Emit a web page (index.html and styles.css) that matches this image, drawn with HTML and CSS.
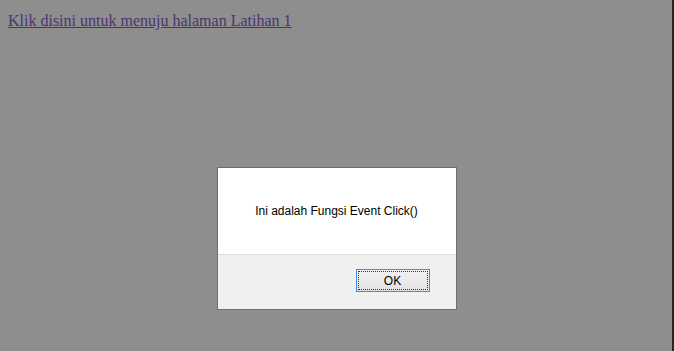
FILE: index.html
```html
<!DOCTYPE html>
<html lang="en">
<head>
    <meta charset="UTF-8">
    <title>Latihan Event Click</title>
    <link rel="stylesheet" href="styles.css">
</head>
<body>
    <a class="link" href="#">Klik disini untuk menuju halaman Latihan 1</a>

    <div class="overlay">
        <div class="dialog">
            <div class="dialog-body">Ini adalah Fungsi Event Click()</div>
            <div class="dialog-footer">
                <button class="btn-ok">OK</button>
            </div>
        </div>
    </div>
</body>
</html>
```

FILE: styles.css
```css
html {
    background: #8e8e8e;
    height: 100%;
}

body {
    margin: 12px 8px 8px;
    font-family: "Liberation Serif", "Times New Roman", serif;
    font-size: 16px;
}

.link {
    color: #4b3470;
}

/* dimmed layer with the alert box on top */
.overlay {
    position: fixed;
    top: 0;
    left: 0;
    right: 0;
    bottom: 0;
    border-right: 2px solid #262626;
    display: flex;
    justify-content: center;
    align-items: flex-start;
    padding: 167px 0 0 1px;
}

.dialog {
    width: 238px;
    border: 1px solid #6e6e6e;
    background: #fff;
    font-family: "Liberation Sans", Arial, sans-serif;
    font-size: 12px;
    color: #000;
}

.dialog-body {
    height: 86px;
    display: flex;
    align-items: center;
    justify-content: center;
}

.dialog-footer {
    height: 55px;
    border-top: 1px solid #dfdfdf;
    background: #f0f0f0;
    display: flex;
    justify-content: flex-end;
    align-items: flex-start;
    padding: 14px 26px 0 0;
    box-sizing: border-box;
}

.btn-ok {
    width: 74px;
    height: 23px;
    border: 1px solid #3d8ee2;
    border-radius: 0;
    background: linear-gradient(#f2f2f2, #e3e3e3);
    outline: 1px dotted #333;
    outline-offset: -3px;
    font-family: "Liberation Sans", Arial, sans-serif;
    font-size: 12px;
    color: #000;
    padding: 0;
}
```
